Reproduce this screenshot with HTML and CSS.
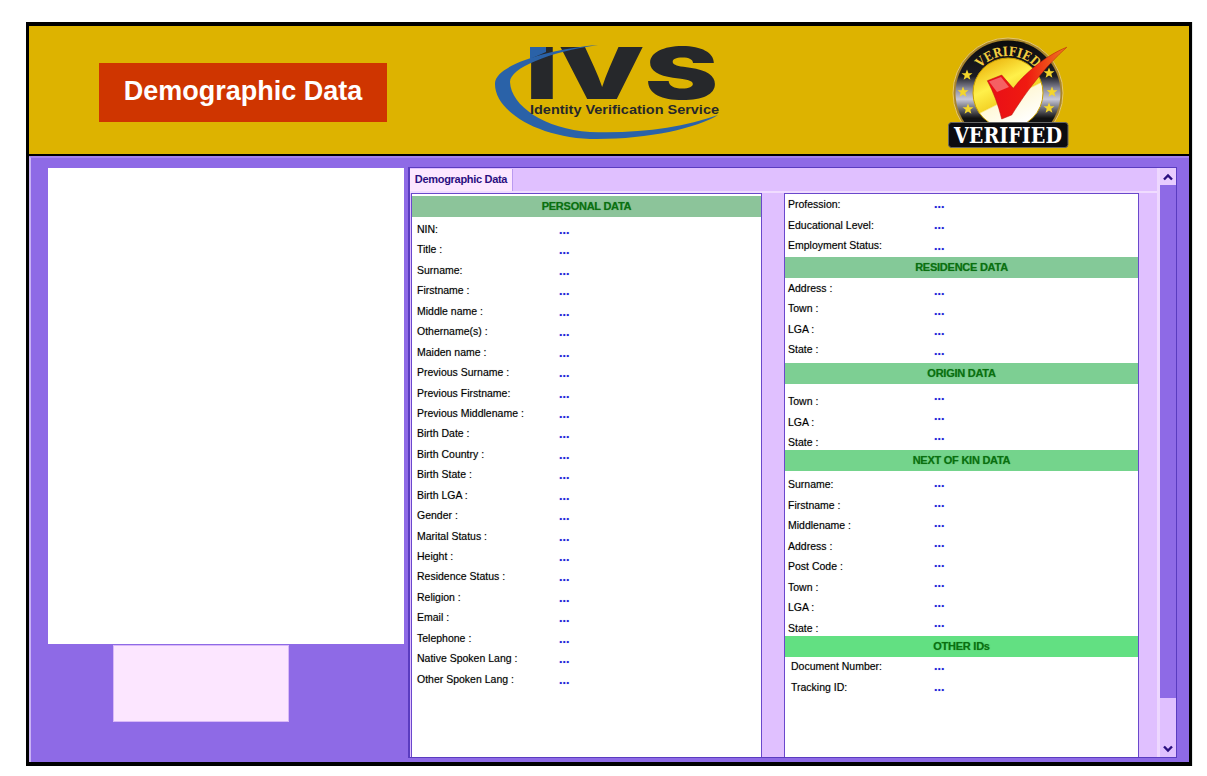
FILE: index.html
```html
<!DOCTYPE html>
<html lang="en">
<head>
<meta charset="utf-8">
<title>Demographic Data</title>
<link rel="stylesheet" href="styles.css">
</head>
<body>
<div class="frame">
  <header class="banner">
    <h1 class="page-title">Demographic Data</h1>
    <svg class="logo" viewBox="0 0 240 106" width="240" height="106" role="img" aria-label="IVS">
      <text class="logo-ivs" x="37" y="61" textLength="192" lengthAdjust="spacingAndGlyphs">IVS</text>
      <path class="logo-swoosh" d="M41 9H57V14L41 21Z"/>
      <path class="logo-swoosh" d="M109 7C60 11 7 27 6 45C5 74 52 101 108 101C160 101 208 90 229 77C195 89 150 96 101 94C56 91 22 68 21 44C21 30 60 14 109 7Z"/>
      <text class="logo-sub" x="41" y="76" textLength="189" lengthAdjust="spacingAndGlyphs">Identity Verification Service</text>
    </svg>
    <svg class="badge" viewBox="0 0 130 112" width="130" height="112" role="img" aria-label="Verified">
      <defs>
        <linearGradient id="disc" x1="0.1" y1="0" x2="0.6" y2="1">
          <stop offset="0" stop-color="#e8a800"/><stop offset="0.4" stop-color="#fff04a"/><stop offset="0.62" stop-color="#f4d428"/><stop offset="0.64" stop-color="#fff8d8"/><stop offset="1" stop-color="#fff"/>
        </linearGradient>
        <linearGradient id="ring" x1="0" y1="0" x2="0" y2="1">
          <stop offset="0" stop-color="#0c0c0c"/><stop offset="0.34" stop-color="#1c1c22"/><stop offset="0.46" stop-color="#8a8a9c"/><stop offset="0.56" stop-color="#c8c8d8"/><stop offset="0.74" stop-color="#111"/>
        </linearGradient>
        <linearGradient id="tick" x1="0" y1="0" x2="1" y2="0">
          <stop offset="0" stop-color="#e80e18"/><stop offset="0.5" stop-color="#f01a10"/><stop offset="1" stop-color="#ee7a20"/>
        </linearGradient>
        <path id="arc" d="M33.5 31.2A37 37 0 0 1 88.5 31.2"/>
        <polygon id="star" points="0,-5.5 1.5,-1.7 5.5,-1.7 2.3,.8 3.4,4.7 0,2.4 -3.4,4.7 -2.3,.8 -5.5,-1.7 -1.5,-1.7"/>
      </defs>
      <circle class="badge-edge" cx="61" cy="56" r="55"/>
      <circle cx="61" cy="56" r="52.5" fill="url(#ring)"/>
      <circle cx="61" cy="56" r="35" fill="url(#disc)" stroke="#c9a000"/>
      <text class="badge-arc"><textPath href="#arc" textLength="62" lengthAdjust="spacingAndGlyphs">VERIFIED</textPath></text>
      <use href="#star" class="star" x="20" y="38"/>
      <use href="#star" class="star" x="16" y="55"/>
      <use href="#star" class="star" x="21" y="72"/>
      <use href="#star" class="star" x="102" y="36"/>
      <use href="#star" class="star" x="105" y="55"/>
      <use href="#star" class="star" x="102" y="71"/>
      <path fill="url(#tick)" stroke="#b5140c" stroke-width=".5" d="M40.3 43.7L54.7 38L66.3 51.3C76 38 99 18 119.7 10.3C100 28 80 53 64.7 78L54.7 82C51.3 68 46.3 54.7 40.3 43.7Z"/>
      <path fill="#ffb0b0" opacity=".5" d="M42 44.5L54 40L62 50L50 55Z"/>
      <rect class="badge-plate" x="1.5" y="85.5" width="119.5" height="25" rx="3"/>
      <text class="badge-word" x="61" y="106" text-anchor="middle" textLength="108" lengthAdjust="spacingAndGlyphs">VERIFIED</text>
    </svg>
  </header>

  <main class="workspace">
    <aside class="photo-col">
      <div class="photo"></div>
      <div class="signature"></div>
    </aside>

    <section class="tab-panel">
      <div class="tab-strip"><span class="tab">Demographic Data</span></div>
      <div class="tab-body">
        <div class="sheet sheet-left">
          <h2 class="band band-personal">PERSONAL DATA</h2>
          <div class="fields fields-personal">
            <div class="labels">
              <span>NIN:</span><span>Title :</span><span>Surname:</span><span>Firstname :</span><span>Middle name :</span><span>Othername(s) :</span><span>Maiden name :</span><span>Previous Surname :</span><span>Previous Firstname:</span><span>Previous Middlename :</span><span>Birth Date :</span><span>Birth Country :</span><span>Birth State :</span><span>Birth LGA :</span><span>Gender :</span><span>Marital Status :</span><span>Height :</span><span>Residence Status :</span><span>Religion :</span><span>Email :</span><span>Telephone :</span><span>Native Spoken Lang :</span><span>Other Spoken Lang :</span>
            </div>
            <div class="values">
              <b>...</b><b>...</b><b>...</b><b>...</b><b>...</b><b>...</b><b>...</b><b>...</b><b>...</b><b>...</b><b>...</b><b>...</b><b>...</b><b>...</b><b>...</b><b>...</b><b>...</b><b>...</b><b>...</b><b>...</b><b>...</b><b>...</b><b>...</b>
            </div>
          </div>
        </div>

        <div class="sheet sheet-right">
          <div class="fields fields-work">
            <div class="labels"><span>Profession:</span><span>Educational Level:</span><span>Employment Status:</span></div>
            <div class="values"><b>...</b><b>...</b><b>...</b></div>
          </div>
          <h2 class="band band-residence">RESIDENCE DATA</h2>
          <div class="fields fields-residence">
            <div class="labels"><span>Address :</span><span>Town :</span><span>LGA :</span><span>State :</span></div>
            <div class="values"><b>...</b><b>...</b><b>...</b><b>...</b></div>
          </div>
          <h2 class="band band-origin">ORIGIN DATA</h2>
          <div class="fields fields-origin">
            <div class="labels"><span>Town :</span><span>LGA :</span><span>State :</span></div>
            <div class="values"><b>...</b><b>...</b><b>...</b></div>
          </div>
          <h2 class="band band-kin">NEXT OF KIN DATA</h2>
          <div class="fields fields-kin">
            <div class="labels"><span>Surname:</span><span>Firstname :</span><span>Middlename :</span><span>Address :</span><span>Post Code :</span><span>Town :</span><span>LGA :</span><span>State :</span></div>
            <div class="values"><b>...</b><b>...</b><b>...</b><b>...</b><b>...</b><b>...</b><b>...</b><b>...</b></div>
          </div>
          <h2 class="band band-other">OTHER IDs</h2>
          <div class="fields fields-other">
            <div class="labels"><span>Document Number:</span><span>Tracking ID:</span></div>
            <div class="values"><b>...</b><b>...</b></div>
          </div>
        </div>

        <div class="gutter"></div>
        <div class="scrollbar">
          <div class="scroll-btn"><svg viewBox="0 0 10 8" width="10" height="8"><path d="M1 6.5L5 2.5L9 6.5" /></svg></div>
          <div class="scroll-thumb"></div>
          <div class="scroll-rest"><svg viewBox="0 0 10 8" width="10" height="8"><path d="M1 1.5L5 5.5L9 1.5" /></svg></div>
        </div>
      </div>
    </section>
  </main>
</div>
</body>
</html>
```
FILE: styles.css
```css
* { box-sizing: border-box; }
html, body { margin: 0; padding: 0; background: #fff; }
body { padding: 22px 15px 0 26px; font-family: "Liberation Sans", Arial, sans-serif; }

.frame {
  width: 1166px;
  height: 744px;
  border-style: solid;
  border-color: #000;
  border-width: 4px 3px 4px 3px;
  display: flex;
  flex-direction: column;
  background: #000;
  box-shadow: 1px 0 0 #e4e8e8;
}

.banner {
  height: 128px;
  flex: none;
  background: #ddb300;
  display: flex;
  align-items: flex-start;
}
.page-title {
  margin: 37px 0 0 70px;
  width: 288px;
  height: 59px;
  background: #cf3500;
  color: #fff;
  font-size: 27px;
  font-weight: 700;
  line-height: 56px;
  text-align: center;
  flex: none;
}
.logo { margin: 12px 0 0 102px; flex: none; overflow: visible; }
.logo-ivs { font-family: Inter, sans-serif; font-weight: 900; font-size: 71.5px; fill: #26282b; }
.logo-swoosh { fill: #2a62a8; }
.logo-sub { font-family: "Liberation Sans", sans-serif; font-weight: 700; font-size: 13px; fill: #26282b; }
.badge { margin: 11px 0 0 218px; flex: none; overflow: visible; }
.badge-edge { fill: #a8842c; stroke: #e4c870; }
.badge-arc { font-family: "DejaVu Serif", serif; font-weight: 700; font-size: 13px; fill: #f2cc40; }
.star { fill: #f4d62c; }
.badge-plate { fill: #0c0c10; stroke: #666; }
.badge-word { font-family: "DejaVu Serif", serif; font-weight: 700; font-size: 23px; fill: #fff; }

.workspace {
  flex: 1;
  margin-top: 2px;
  min-height: 0;
  display: flex;
  background: #8e6ae6;
  border-top: 2px solid #a583ef;
  border-left: 2px solid #c9b2f5;
  padding: 9px 12px 4px 17px;
}
.photo-col { width: 360px; padding-top: 1px; flex: none; display: flex; flex-direction: column; align-items: flex-start; }
.photo { width: 356px; height: 476px; background: #fff; flex: none; }
.signature { width: 176px; height: 77px; margin: 1px 0 0 65px; background: #fce6ff; border: 1px solid #d9b8f8; flex: none; }

.tab-panel {
  width: 769px;
  flex: none;
  border: 1px solid #5a3cc0;
  border-left-width: 2px;
  background: #e0c0ff;
  display: flex;
  flex-direction: column;
}
.tab-strip { height: 25px; padding-top: 1px; flex: none; border-bottom: 2px solid #f0dcff; }
.tab {
  display: block;
  width: 103px;
  height: 22px;
  background: #fce6ff;
  color: #2a0f80;
  font-size: 11px;
  font-weight: 700;
  line-height: 20px;
  text-align: center;
  letter-spacing: -.3px;
  border-right: 1px solid #b99af0;
}
.tab-body { flex: 1; min-height: 0; display: flex; padding-left: 1px; }

.sheet {
  background: #fff;
  border: 1px solid #6a48cc;
  border-bottom: none;
  flex: none;
}
.sheet-left { width: 351px; }
.sheet-right { width: 355px; margin-left: 22px; }
.gutter { width: 18px; flex: none; }
.scrollbar { width: 19px; flex: none; margin-top: -25px; border-left: 3px solid #eed8ff; display: flex; flex-direction: column; background: #e0c0ff; }

.scroll-btn { height: 17px; flex: none; display: flex; align-items: center; justify-content: center; background: #e8ccff; }
.scroll-thumb { height: 513px; flex: none; background: #8e6ae6; }
.scroll-rest { flex: 1; display: flex; align-items: flex-end; justify-content: center; padding-bottom: 4px; }
.scrollbar path { fill: none; stroke: #2a0f80; stroke-width: 2.4; }

.band {
  margin: 0;
  height: 21px;
  font-size: 11px;
  font-weight: 700;
  line-height: 20px;
  letter-spacing: -.25px;
  text-align: center;
  color: #0a7010;
  text-shadow: 0 0 1px rgba(10, 112, 16, .5);
  flex: none;
}
.band-personal { background: #8cc49a; margin-top: 2px; }
.band-residence { background: #84c998; }
.band-origin { background: #7dcf93; }
.band-kin { background: #74d48c; }
.band-other { background: #62e082; }

.fields { display: flex; font-size: 10.5px; color: #000; text-shadow: 0 0 1px rgba(0, 0, 0, .35); }
.labels, .values { display: flex; flex-direction: column; }
.labels span, .values b { display: block; line-height: 12px; }
.values b { color: #1a22d8; font-weight: 700; font-size: 12.5px; text-shadow: 0 0 1px rgba(26, 34, 216, .4); }

.fields-personal { height: 440px; padding-left: 5px; }
.fields-personal .labels { width: 142px; padding-top: 6px; gap: 8.45px; }
.fields-personal .values { padding-top: 7px; gap: 8.45px; }

.sheet-right .labels { width: 146px; margin-left: 3px; }
.fields-work { height: 63px; }
.fields-work .labels { padding-top: 4px; gap: 8.5px; }
.fields-work .values { padding-top: 4px; gap: 9px; }
.fields-residence { height: 85px; }
.fields-residence .labels { padding-top: 4px; gap: 8.33px; }
.fields-residence .values { padding-top: 6.5px; gap: 8.33px; }
.fields-origin { height: 66px; }
.fields-origin .labels { padding-top: 11px; gap: 8.5px; }
.fields-origin .values { padding-top: 6px; gap: 8px; }
.fields-kin { height: 165px; }
.fields-kin .labels { padding-top: 7px; gap: 8.57px; }
.fields-kin .values { padding-top: 6px; gap: 8px; }
.sheet-right .fields-other .labels { padding-top: 3px; margin-left: 6px; width: 143px; gap: 9px; }
.fields-other .values { padding-top: 3px; gap: 9px; }
```
